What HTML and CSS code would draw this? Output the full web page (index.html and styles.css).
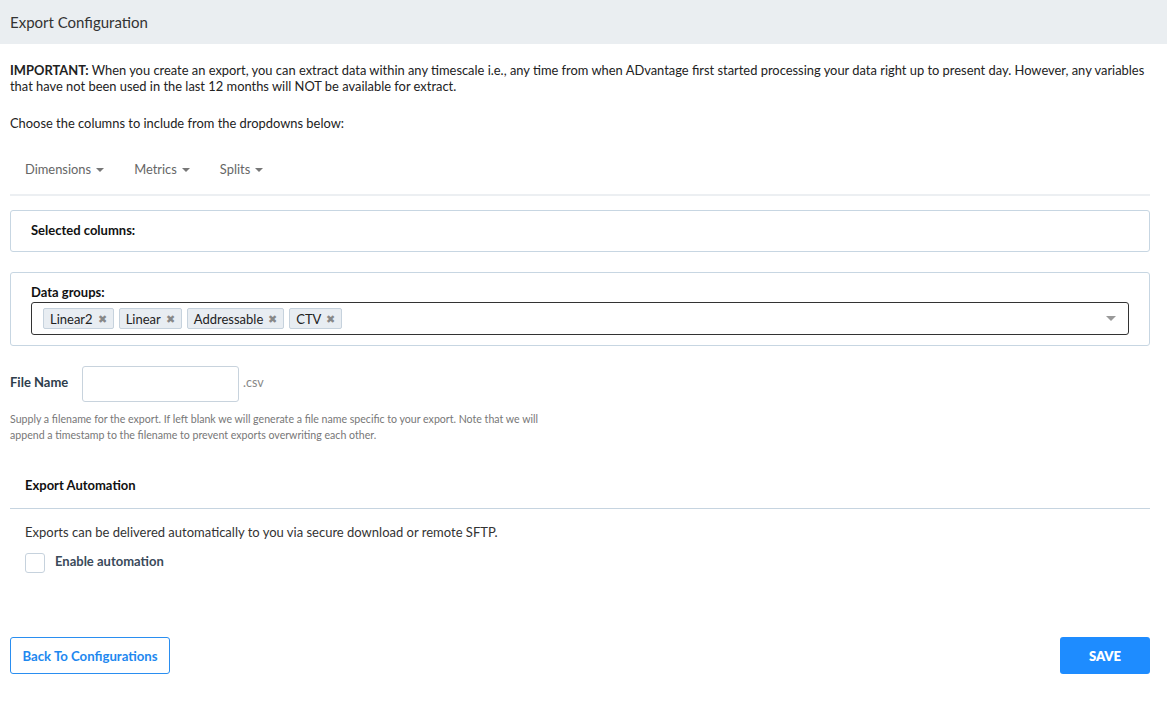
FILE: index.html
```html
<!DOCTYPE html>
<html>
<head>
<meta charset="utf-8">
<link rel="stylesheet" href="styles.css">
</head>
<body>
<div class="header">Export Configuration</div>
<div class="content">
  <p class="important"><b>IMPORTANT:</b> When you create an export, you can extract data within any timescale i.e., any time from when ADvantage first started processing your data right up to present day. However, any variables that have not been used in the last 12 months will NOT be available for extract.</p>
  <p class="choose">Choose the columns to include from the dropdowns below:</p>
  <div class="tabs">
    <span class="tab">Dimensions <i class="caret"></i></span>
    <span class="tab">Metrics <i class="caret"></i></span>
    <span class="tab">Splits <i class="caret"></i></span>
  </div>
  <div class="panel selected">
    <div class="panel-label">Selected columns:</div>
  </div>
  <div class="panel groups">
    <div class="panel-label">Data groups:</div>
    <div class="select">
      <div class="tags">
        <span class="tag">Linear2 <span class="x">✖</span></span>
        <span class="tag">Linear <span class="x">✖</span></span>
        <span class="tag">Addressable <span class="x">✖</span></span>
        <span class="tag">CTV <span class="x">✖</span></span>
      </div>
      <i class="select-caret"></i>
    </div>
  </div>
  <div class="file-row">
    <label class="file-label">File Name</label>
    <div class="file-input"></div>
    <span class="ext">.csv</span>
  </div>
  <p class="help">Supply a filename for the export. If left blank we will generate a file name specific to your export. Note that we will append a timestamp to the filename to prevent exports overwriting each other.</p>
  <div class="auto-head">Export Automation</div>
  <p class="auto-text">Exports can be delivered automatically to you via secure download or remote SFTP.</p>
  <div class="check-row">
    <span class="checkbox"></span>
    <span class="check-label">Enable automation</span>
  </div>
  <div class="actions">
    <button class="btn-back">Back To Configurations</button>
    <button class="btn-save">SAVE</button>
  </div>
</div>
</body>
</html>
```
FILE: styles.css
```css
* { box-sizing: border-box; }
body {
  margin: 0;
  font-family: Lato, "Open Sans", sans-serif;
  color: #222;
  background: #fff;
  font-size: 13px;
}
.header {
  height: 44px;
  background: #eaeef1;
  padding: 13px 10px 0;
  font-size: 15px;
  color: #333;
}
.content {
  padding: 18px 17px 0 10px;
}
.important {
  margin: 0;
  line-height: 16px;
  font-size: 12.9px;
  color: #222;
}
.important b { font-weight: 700; }
.choose {
  margin: 21px 0 0;
  font-size: 12.9px;
  line-height: 16px;
}
.tabs {
  display: flex;
  padding: 30px 0 0 15px;
  height: 65px;
  border-bottom: 2px solid #eceff2;
}
.tab {
  color: #666;
  font-size: 12.9px;
  margin-right: 30px;
  display: inline-flex;
  align-items: center;
  height: 16px;
}
.caret {
  display: inline-block;
  width: 0; height: 0;
  border-left: 4px solid transparent;
  border-right: 4px solid transparent;
  border-top: 4px solid #777;
  margin-left: 5px;
  margin-top: 1px;
}
.panel {
  border: 1px solid #c7d6e2;
  border-radius: 3px;
}
.selected {
  margin-top: 14px;
  height: 42px;
  padding: 11px 20px 0;
}
.panel-label {
  font-weight: 700;
  font-size: 13px;
  color: #111;
}
.groups {
  margin-top: 20px;
  height: 74px;
  padding: 11px 20px 0;
}
.select {
  margin-top: 2px;
  height: 33px;
  border: 1px solid #333;
  border-radius: 3px;
  display: flex;
  align-items: center;
  justify-content: space-between;
  padding: 0 12px 0 11px;
}
.tags { display: flex; gap: 5px; }
.tag {
  background: #e8edf2;
  border: 1px solid #c6d2dd;
  border-radius: 2px;
  height: 21px;
  padding: 0 6px;
  display: inline-flex;
  align-items: center;
  font-size: 13px;
  color: #222;
}
.x {
  color: #888;
  font-size: 11px;
  margin-left: 5px;
}
.select-caret {
  width: 0; height: 0;
  border-left: 5px solid transparent;
  border-right: 5px solid transparent;
  border-top: 5px solid #999;
}
.file-row {
  display: flex;
  align-items: center;
  margin-top: 20px;
}
.file-label {
  font-weight: 700;
  font-size: 13px;
  color: #2e3d4c;
  width: 72px;
  margin-top: -5px;
}
.file-input {
  width: 157px;
  height: 36px;
  border: 1px solid #c8d3dd;
  border-radius: 3px;
}
.ext {
  color: #888;
  font-size: 12.5px;
  margin-left: 4px;
  margin-top: -4px;
}
.help {
  margin: 9px 0 0;
  width: 565px;
  font-size: 10.6px;
  line-height: 16px;
  color: #777;
}
.auto-head {
  margin-top: 34px;
  padding: 0 15px;
  height: 32px;
  border-bottom: 1px solid #c6d4e0;
  font-weight: 700;
  font-size: 13px;
  color: #111;
}
.auto-text {
  margin: 15px 0 0 15px;
  font-size: 13px;
  color: #333;
}
.check-row {
  display: flex;
  align-items: center;
  margin: 13px 0 0 15px;
}
.checkbox {
  width: 20px;
  height: 20px;
  border: 1px solid #c6d2dd;
  border-radius: 3px;
}
.check-label {
  margin-left: 10px;
  font-weight: 700;
  font-size: 13px;
  color: #3a4a5a;
  margin-top: -4px;
}
.actions {
  display: flex;
  justify-content: space-between;
  margin-top: 64px;
}
.btn-back {
  width: 160px;
  height: 37px;
  background: #fff;
  border: 1px solid #2a8ef0;
  border-radius: 3px;
  color: #1e88ef;
  font-family: Lato, sans-serif;
  font-weight: 700;
  font-size: 13.2px;
}
.btn-save {
  width: 90px;
  height: 37px;
  background: #1e8cff;
  border: none;
  border-radius: 3px;
  color: #fff;
  font-family: Lato, sans-serif;
  font-weight: 800;
  font-size: 13px;
}
```
